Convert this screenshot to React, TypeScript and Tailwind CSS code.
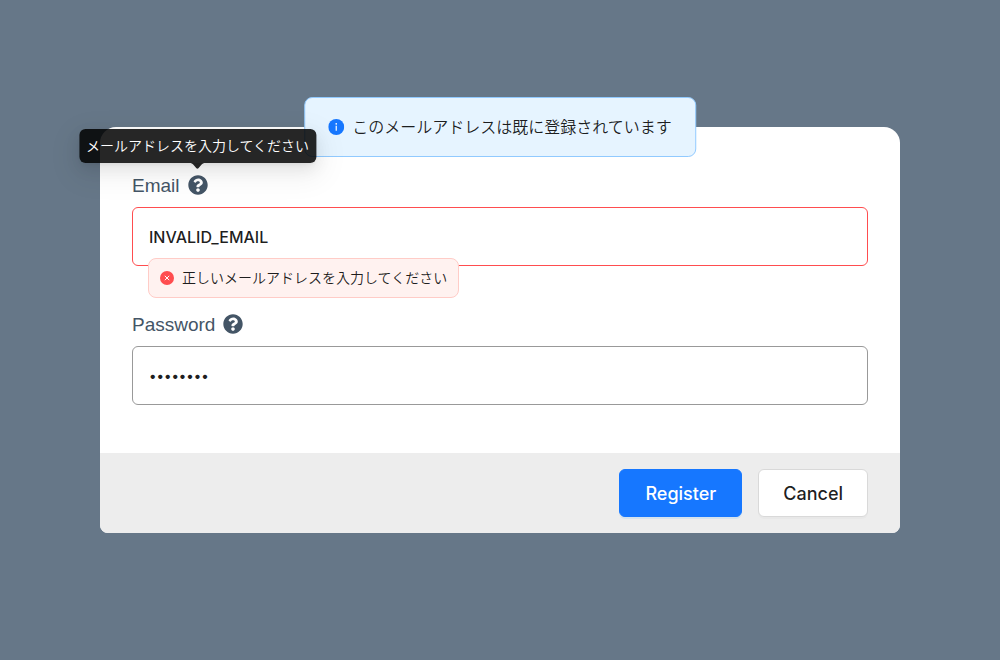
import { useState, type InputHTMLAttributes, type ReactNode } from "react";

function HelpIcon() {
  return (
    <svg viewBox="0 0 512 512" className="h-5 w-5" fill="currentColor" aria-hidden="true">
      <path d="M504 256c0 136.997-111.043 248-248 248S8 392.997 8 256C8 119.083 119.043 8 256 8s248 111.083 248 248zM262.655 90c-54.497 0-89.255 22.957-116.549 63.758-3.536 5.286-2.353 12.415 2.715 16.258l34.699 26.31c5.205 3.947 12.621 3.008 16.665-2.122 17.864-22.658 30.113-35.797 57.303-35.797 20.429 0 45.698 13.148 45.698 32.958 0 14.976-12.363 22.667-32.534 33.976C247.128 238.528 216 254.941 216 296v4c0 6.627 5.373 12 12 12h56c6.627 0 12-5.373 12-12v-1.333c0-28.462 83.186-29.647 83.186-106.667 0-58.002-60.165-102-116.531-102zM256 338c-25.365 0-46 20.635-46 46 0 25.364 20.635 46 46 46s46-20.636 46-46c0-25.365-20.635-46-46-46z" />
    </svg>
  );
}

function InfoIcon() {
  return (
    <svg viewBox="0 0 16 16" className="h-4 w-4 shrink-0" aria-hidden="true">
      <circle cx="8" cy="8" r="8" fill="#1677ff" />
      <circle cx="8" cy="4.8" r="0.85" fill="#fff" />
      <rect x="7.4" y="6.7" width="1.2" height="5" rx="0.1" fill="#fff" />
    </svg>
  );
}

function ErrorIcon() {
  return (
    <svg viewBox="0 0 14 14" className="h-3.5 w-3.5 shrink-0" aria-hidden="true">
      <circle cx="7" cy="7" r="7" fill="#ff4d4f" />
      <path d="M4.8 4.8l4.4 4.4M9.2 4.8L4.8 9.2" stroke="#fff" strokeWidth="1" />
    </svg>
  );
}

function Tooltip({ children }: { children: ReactNode }) {
  return (
    <div
      role="tooltip"
      className="absolute bottom-full left-1/2 z-20 mb-3 flex h-[34px] -translate-x-1/2 items-center rounded-md bg-black/85 px-[7px] text-sm font-[350] whitespace-nowrap text-white shadow-[0_6px_16px_0_rgba(0,0,0,0.08),0_3px_6px_-4px_rgba(0,0,0,0.12),0_9px_28px_8px_rgba(0,0,0,0.05)]"
    >
      {children}
      <svg viewBox="0 0 16 6" className="absolute top-full left-1/2 h-1.5 w-4 -translate-x-1/2" aria-hidden="true">
        <path d="M0 0C2 0 3 .7 4 1.7L7 5.2C7.6 5.8 8.4 5.8 9 5.2L12 1.7C13 .7 14 0 16 0Z" fill="#000" fillOpacity="0.85" />
      </svg>
    </div>
  );
}

interface FieldProps extends InputHTMLAttributes<HTMLInputElement> {
  id: string;
  label: string;
  tooltip?: string;
  error?: string;
}

function Field({ id, label, tooltip, error, ...props }: FieldProps) {
  return (
    <div className="relative">
      <div className="mb-3 flex h-5 items-start gap-2 text-[#445566]">
        <label htmlFor={id} className="font-['Liberation_Sans',Arial,sans-serif] text-[19px] leading-[22px]">
          {label}
        </label>
        <button type="button" aria-label={`${label} help`} className="relative h-5 w-5">
          <HelpIcon />
          {tooltip && <Tooltip>{tooltip}</Tooltip>}
        </button>
      </div>
      <input
        id={id}
        aria-invalid={!!error}
        className={`block h-[59px] w-full rounded-md border bg-white px-4 font-medium text-black/88 outline-none ${
          props.type === "password" ? "text-sm" : "text-base"
        } ${error ? "border-[#ff4d4f]" : "border-[#999999]"}`}
        {...props}
      />
      {error && (
        <div
          role="alert"
          className="absolute top-full left-4 z-10 -mt-2 flex h-10 items-center gap-2 rounded-lg border border-[#ffccc7] bg-[#fff2f0] px-[11px] text-sm font-[350] whitespace-nowrap text-black/88"
        >
          <ErrorIcon />
          {error}
        </div>
      )}
    </div>
  );
}

export default function App() {
  const [email, setEmail] = useState("INVALID_EMAIL");
  const [password, setPassword] = useState("password");

  return (
    <main className="flex min-h-screen items-center justify-center bg-[#667788] px-[10%] font-[Inter,'Noto_Sans_CJK_JP',sans-serif]">
      <form className="relative w-full rounded-t-2xl rounded-b-lg bg-white" onSubmit={(e) => e.preventDefault()}>
        <div
          role="status"
          className="absolute top-0 left-1/2 z-10 flex h-[60px] -translate-x-1/2 -translate-y-1/2 items-center gap-2 rounded-lg border border-[#91caff] bg-[#e6f4ff] px-[23px] text-base font-[350] whitespace-nowrap text-black/88"
        >
          <InfoIcon />
          このメールアドレスは既に登録されています
        </div>
        <div className="space-y-12 px-8 py-12">
          <Field
            id="email"
            label="Email"
            type="text"
            value={email}
            onChange={(e) => setEmail(e.target.value)}
            tooltip="メールアドレスを入力してください"
            error="正しいメールアドレスを入力してください"
          />
          <Field
            id="password"
            label="Password"
            type="password"
            value={password}
            onChange={(e) => setPassword(e.target.value)}
          />
        </div>
        <div className="flex justify-end gap-4 rounded-b-lg bg-[#ededed] px-8 py-4">
          <button
            type="submit"
            className="h-12 rounded-md border border-[#1677ff] bg-[#1677ff] px-[25px] pt-0.5 text-lg font-medium text-white shadow-[0_2px_0_rgba(5,145,255,0.1)]"
          >
            Register
          </button>
          <button
            type="button"
            className="h-12 rounded-md border border-[#d9d9d9] bg-white px-6 pt-0.5 text-lg font-medium text-black/88 shadow-[0_2px_0_rgba(0,0,0,0.02)]"
          >
            Cancel
          </button>
        </div>
      </form>
    </main>
  );
}
